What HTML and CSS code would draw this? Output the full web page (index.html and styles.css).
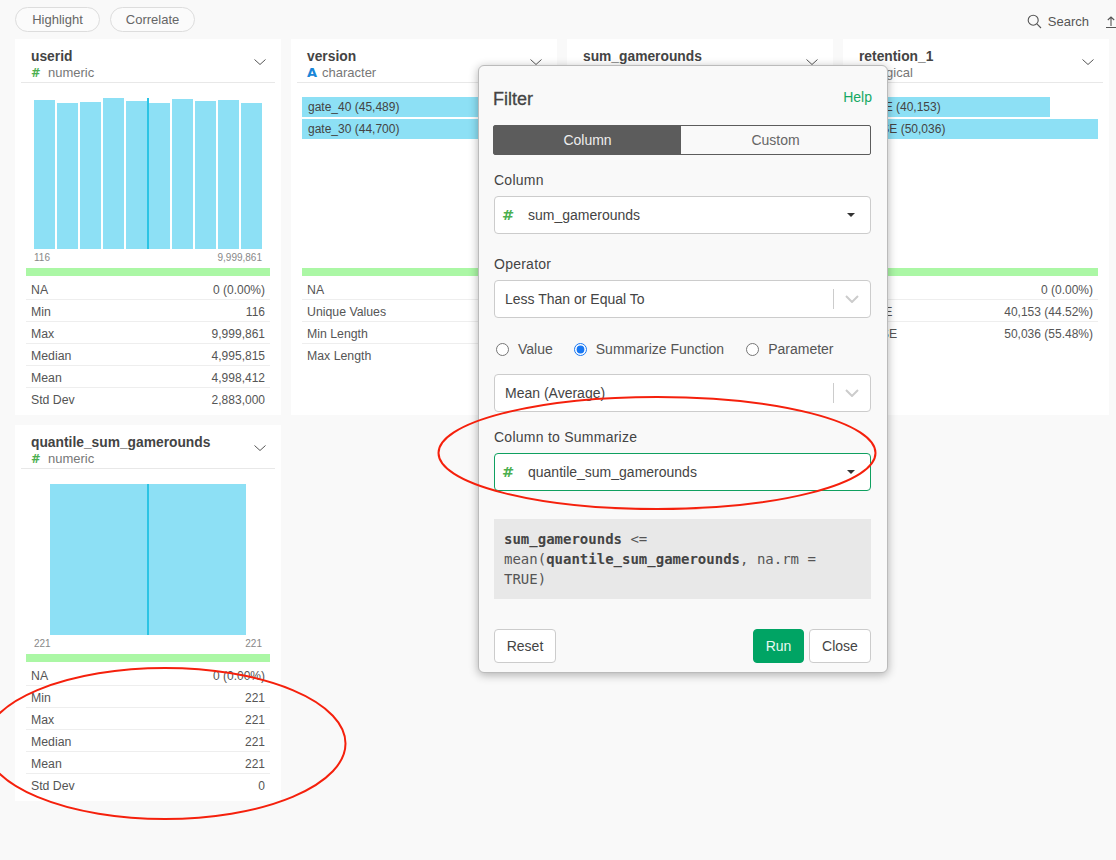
FILE: index.html
```html
<!DOCTYPE html>
<html lang="en">

<head>
    <meta charset="UTF-8">
    <title>Filter</title>
    <link rel="stylesheet" href="styles.css">
</head>

<body>
    <div class="topbar">
        <div class="pills">
            <span class="pill">Highlight</span>
            <span class="pill">Correlate</span>
        </div>
        <div class="tools">
            <svg class="search-icon" width="15" height="15" viewBox="0 0 15 15"><circle cx="6.2" cy="6.2" r="5" /><path d="M9.9 9.9 L14 14" /></svg>
            <span>Search</span>
            <svg class="upload-icon" width="10" height="12" viewBox="0 0 10 12"><path d="M5 10 V1 M1.8 4 L5 1 L8.2 4 M0 11.5 H10" /></svg>
        </div>
    </div>

    <div class="grid">
        <!-- userid -->
        <div class="card">
            <div class="card-head">
                <div>
                    <div class="card-title">userid</div>
                    <div class="card-sub"><span class="ico-num">#</span>numeric</div>
                </div>
                <svg class="chev" width="12" height="6" viewBox="0 0 12 6"><path d="M0.5 0.500 L6 5.500 L11.5 0.500" /></svg>
            </div>
            <div class="card-body">
                <div class="chart">
                    <div class="bars">
                        <i style="height:149px"></i>
                        <i style="height:146px"></i>
                        <i style="height:147px"></i>
                        <i style="height:151px"></i>
                        <i style="height:148px"></i>
                        <i style="height:146px"></i>
                        <i style="height:150px"></i>
                        <i style="height:148px"></i>
                        <i style="height:149px"></i>
                        <i style="height:146px"></i>
                        <b class="median"></b>
                    </div>
                    <div class="axis"><span>116</span><span>9,999,861</span></div>
                </div>
                <div class="valid"></div>
                <div class="row"><span>NA</span><span class="val">0 (0.00%)</span></div>
                <div class="row"><span>Min</span><span class="val">116</span></div>
                <div class="row"><span>Max</span><span class="val">9,999,861</span></div>
                <div class="row"><span>Median</span><span class="val">4,995,815</span></div>
                <div class="row"><span>Mean</span><span class="val">4,998,412</span></div>
                <div class="row"><span>Std Dev</span><span class="val">2,883,000</span></div>
            </div>
        </div>

        <!-- version -->
        <div class="card">
            <div class="card-head">
                <div>
                    <div class="card-title">version</div>
                    <div class="card-sub"><span class="ico-chr">A</span>character</div>
                </div>
                <svg class="chev" width="12" height="6" viewBox="0 0 12 6"><path d="M0.5 0.500 L6 5.500 L11.5 0.500" /></svg>
            </div>
            <div class="card-body">
                <div class="chart cats">
                    <div class="cat" style="width:100%">gate_40 (45,489)</div>
                    <div class="cat" style="width:98%">gate_30 (44,700)</div>
                </div>
                <div class="valid"></div>
                <div class="row"><span>NA</span><span class="val">0 (0.00%)</span></div>
                <div class="row"><span>Unique Values</span><span class="val">2</span></div>
                <div class="row"><span>Min Length</span><span class="val">7</span></div>
                <div class="row"><span>Max Length</span><span class="val">7</span></div>
            </div>
        </div>

        <!-- sum_gamerounds -->
        <div class="card">
            <div class="card-head">
                <div>
                    <div class="card-title">sum_gamerounds</div>
                    <div class="card-sub"><span class="ico-num">#</span>numeric</div>
                </div>
                <svg class="chev" width="12" height="6" viewBox="0 0 12 6"><path d="M0.5 0.500 L6 5.500 L11.5 0.500" /></svg>
            </div>
        </div>

        <!-- retention_1 -->
        <div class="card">
            <div class="card-head">
                <div>
                    <div class="card-title">retention_1</div>
                    <div class="card-sub"><span class="ico-lgl">L</span>logical</div>
                </div>
                <svg class="chev" width="12" height="6" viewBox="0 0 12 6"><path d="M0.5 0.500 L6 5.500 L11.5 0.500" /></svg>
            </div>
            <div class="card-body">
                <div class="chart cats">
                    <div class="cat" style="width:80.3%">TRUE (40,153)</div>
                    <div class="cat" style="width:100%">FALSE (50,036)</div>
                </div>
                <div class="valid"></div>
                <div class="row"><span>NA</span><span class="val">0 (0.00%)</span></div>
                <div class="row"><span>TRUE</span><span class="val">40,153 (44.52%)</span></div>
                <div class="row"><span>FALSE</span><span class="val">50,036 (55.48%)</span></div>
            </div>
        </div>

        <!-- quantile_sum_gamerounds -->
        <div class="card">
            <div class="card-head">
                <div>
                    <div class="card-title">quantile_sum_gamerounds</div>
                    <div class="card-sub"><span class="ico-num">#</span>numeric</div>
                </div>
                <svg class="chev" width="12" height="6" viewBox="0 0 12 6"><path d="M0.5 0.500 L6 5.500 L11.5 0.500" /></svg>
            </div>
            <div class="card-body">
                <div class="chart">
                    <div class="bars single">
                        <i style="height:151px"></i>
                        <b class="median"></b>
                    </div>
                    <div class="axis"><span>221</span><span>221</span></div>
                </div>
                <div class="valid"></div>
                <div class="row"><span>NA</span><span class="val">0 (0.00%)</span></div>
                <div class="row"><span>Min</span><span class="val">221</span></div>
                <div class="row"><span>Max</span><span class="val">221</span></div>
                <div class="row"><span>Median</span><span class="val">221</span></div>
                <div class="row"><span>Mean</span><span class="val">221</span></div>
                <div class="row"><span>Std Dev</span><span class="val">0</span></div>
            </div>
        </div>
    </div>

    <div class="modal">
        <div class="modal-head">
            <span class="modal-title">Filter</span>
            <span class="help">Help</span>
        </div>
        <div class="seg">
            <span class="seg-item active">Column</span>
            <span class="seg-item">Custom</span>
        </div>

        <div class="label">Column</div>
        <div class="select">
            <span class="sel-num">#</span>
            <span class="sel-text">sum_gamerounds</span>
            <span class="caret"></span>
        </div>

        <div class="label label-far">Operator</div>
        <div class="select plain">
            <span class="sel-text">Less Than or Equal To</span>
            <span class="sep"></span>
            <svg class="sel-chev" width="14" height="8" viewBox="0 0 14 8"><path d="M1 1 L7 7 L13 1" /></svg>
        </div>

        <div class="radios">
            <label class="radio"><input type="radio" name="kind">Value</label>
            <label class="radio"><input type="radio" name="kind" checked>Summarize Function</label>
            <label class="radio"><input type="radio" name="kind">Parameter</label>
        </div>

        <div class="select plain">
            <span class="sel-text">Mean (Average)</span>
            <span class="sep"></span>
            <svg class="sel-chev" width="14" height="8" viewBox="0 0 14 8"><path d="M1 1 L7 7 L13 1" /></svg>
        </div>

        <div class="label">Column to Summarize</div>
        <div class="select focused">
            <span class="sel-num">#</span>
            <span class="sel-text">quantile_sum_gamerounds</span>
            <span class="caret"></span>
        </div>

        <pre class="code"><b>sum_gamerounds</b> &lt;=
mean(<b>quantile_sum_gamerounds</b>, na.rm =
TRUE)</pre>

        <div class="modal-foot">
            <button class="btn">Reset</button>
            <span class="foot-right">
                <button class="btn run">Run</button>
                <button class="btn">Close</button>
            </span>
        </div>
    </div>

    <svg class="marks" width="1116" height="860" viewBox="0 0 1116 860">
        <ellipse cx="657" cy="453" rx="218.500" ry="56" />
        <ellipse cx="165" cy="743.500" rx="180.500" ry="75.500" />
    </svg>
</body>

</html>
```

FILE: styles.css
```css
* {
    padding: 0;
    margin: 0;
    box-sizing: border-box;
}

html,
body {
    height: 860px;
    overflow: hidden;
}

body {
    background: #f9f9f9;
    font-family: "Liberation Sans", Arial, sans-serif;
    color: #444;
    position: relative;
}

.topbar {
    height: 39px;
    padding: 7px 0 0 15px;
    display: flex;
    justify-content: space-between;
}

.pills {
    display: flex;
    gap: 10px;
}

.pill {
    width: 85px;
    height: 25px;
    border: 1px solid #ddd;
    border-radius: 13px;
    background: #fbfbfb;
    font-size: 13px;
    line-height: 23px;
    text-align: center;
    color: #666;
}

.tools {
    display: flex;
    align-items: center;
    height: 29px;
    font-size: 13px;
    color: #555;
}

.search-icon {
    fill: none;
    stroke: #555;
    stroke-width: 1.1;
    margin-right: 6px;
}

.upload-icon {
    fill: none;
    stroke: #555;
    stroke-width: 1.1;
    margin-left: 17px;
}

.grid {
    display: grid;
    grid-template-columns: repeat(4, 266px);
    grid-auto-rows: 376px;
    gap: 10px;
    padding-left: 15px;
}

.card {
    background: #fff;
}

.card-head {
    height: 44px;
    margin: 0 6px;
    padding: 10px 9px 0 10px;
    border-bottom: 1px solid #e8e8e8;
    display: flex;
    justify-content: space-between;
}

.card-title {
    font-size: 13.800px;
    font-weight: bold;
    line-height: 16px;
    color: #444;
}

.card-sub {
    font-size: 13px;
    line-height: 16px;
    color: #777;
    white-space: nowrap;
}

.ico-num,
.ico-chr,
.ico-lgl {
    display: inline-block;
    width: 17px;
    font-family: "DejaVu Sans", sans-serif;
    font-size: 11.500px;
    font-weight: bold;
}

.ico-num {
    color: #4caf50;
}

.ico-chr {
    width: 15px;
    font-size: 13px;
    color: #1a86d8;
}

.ico-lgl {
    color: #e07b3a;
}

.chev {
    fill: none;
    stroke: #555;
    margin-top: 10px;
}

.card-body {
    padding: 0 11px;
}

.chart {
    height: 185px;
    padding: 15px 8px 0;
}

.bars {
    height: 151px;
    display: flex;
    align-items: flex-end;
    gap: 2px;
    position: relative;
}

.bars i {
    flex: 1;
    background: #8de0f5;
}

.bars.single {
    padding: 0 16px;
}

.median {
    position: absolute;
    left: 113px;
    top: 0;
    width: 2px;
    height: 151px;
    background: #2cc4e4;
}

.axis {
    display: flex;
    justify-content: space-between;
    margin-top: 2px;
    font-size: 10px;
    line-height: 13px;
    color: #888;
}

.cats {
    padding: 14px 0 0;
}

.cat {
    height: 20px;
    margin-bottom: 2px;
    padding-left: 6px;
    background: #8de0f5;
    font-size: 12px;
    line-height: 20px;
    color: #444;
    white-space: nowrap;
}

.valid {
    height: 8px;
    margin-bottom: 2px;
    background: #abf7a5;
}

.row {
    height: 22px;
    padding: 1px 5px 0;
    border-bottom: 1px solid #eee;
    display: flex;
    justify-content: space-between;
    font-size: 12.300px;
    line-height: 22px;
    color: #555;
}

.row .val {
    font-size: 12px;
}

.row:last-child {
    border-bottom: 0;
}

.modal {
    position: absolute;
    left: 478px;
    top: 65px;
    width: 410px;
    height: 608px;
    padding: 22px 16px 0 15px;
    background: #f9f9f9;
    border: 1px solid #bbb;
    border-radius: 6px;
    box-shadow: 0 2px 10px rgba(0, 0, 0, 0.3);
    font-size: 14px;
}

.modal-head {
    display: flex;
    justify-content: space-between;
    height: 20px;
    margin: 0 -1px 0 -1px;
}

.modal-title {
    font-size: 18px;
    line-height: 22px;
    color: #444;
    -webkit-text-stroke: 0.3px #444;
}

.help {
    line-height: 20px;
    margin-top: -1px;
    color: #15a864;
}

.seg {
    display: flex;
    height: 30px;
    margin: 17px 0 0 -1px;
    border: 1px solid #5c5c5c;
    border-radius: 2px;
}

.seg-item {
    flex: 1;
    text-align: center;
    line-height: 28px;
    color: #666;
}

.seg-item.active {
    flex: 0 0 187px;
    background: #5c5c5c;
    color: #eee;
}

.label {
    margin-top: 15px;
    line-height: 20px;
    letter-spacing: 0.25px;
}

.label-far {
    margin-top: 20px;
}

.select {
    height: 38px;
    margin-top: 6px;
    padding: 0 10px 0 7px;
    background: #fff;
    border: 1px solid #ccc;
    border-radius: 4px;
    display: flex;
    align-items: center;
    color: #444;
}

.select.plain {
    padding: 0 11px 0 10px;
}

.select.focused {
    border-color: #0fa060;
}

.sel-num {
    width: 26px;
    font-family: "DejaVu Sans", sans-serif;
    font-size: 14.500px;
    font-weight: bold;
    color: #4caf50;
}

.sel-text {
    flex: 1;
}

.caret {
    width: 0;
    height: 0;
    margin-right: 5px;
    border-left: 4px solid transparent;
    border-right: 4px solid transparent;
    border-top: 4px solid #333;
}

.sep {
    width: 1px;
    height: 20px;
    margin-right: 11px;
    background: #ccc;
}

.sel-chev {
    fill: none;
    stroke: #ccc;
    stroke-width: 2;
}

.radios {
    display: flex;
    gap: 21px;
    height: 20px;
    margin: 21px 0 15px;
    padding-left: 2px;
}

.radios + .select {
    margin-top: 0;
}

.radio {
    display: flex;
    align-items: center;
    line-height: 20px;
    color: #555;
}

.radio:last-child {
    margin-left: 1px;
}

.radio input {
    width: 13px;
    height: 13px;
    margin-right: 9px;
    accent-color: #1877f2;
}

.code {
    margin-top: 28px;
    height: 80px;
    padding: 10px;
    background: #e8e8e8;
    font-family: "DejaVu Sans Mono", monospace;
    font-size: 14px;
    line-height: 20px;
    color: #555;
}

.code b {
    color: #444;
}

.modal-foot {
    display: flex;
    justify-content: space-between;
    margin-top: 30px;
}

.foot-right {
    display: flex;
    gap: 5px;
}

.btn {
    height: 34px;
    width: 62px;
    background: #fff;
    border: 1px solid #ccc;
    border-radius: 4px;
    font-family: inherit;
    font-size: 14px;
    color: #444;
}

.btn.run {
    width: 51px;
    background: #00a464;
    border-color: #00a464;
    color: #e8f8f0;
}

.marks {
    position: absolute;
    left: 0;
    top: 0;
    pointer-events: none;
}

.marks ellipse {
    fill: none;
    stroke: #f5200c;
    stroke-width: 2;
}
```
